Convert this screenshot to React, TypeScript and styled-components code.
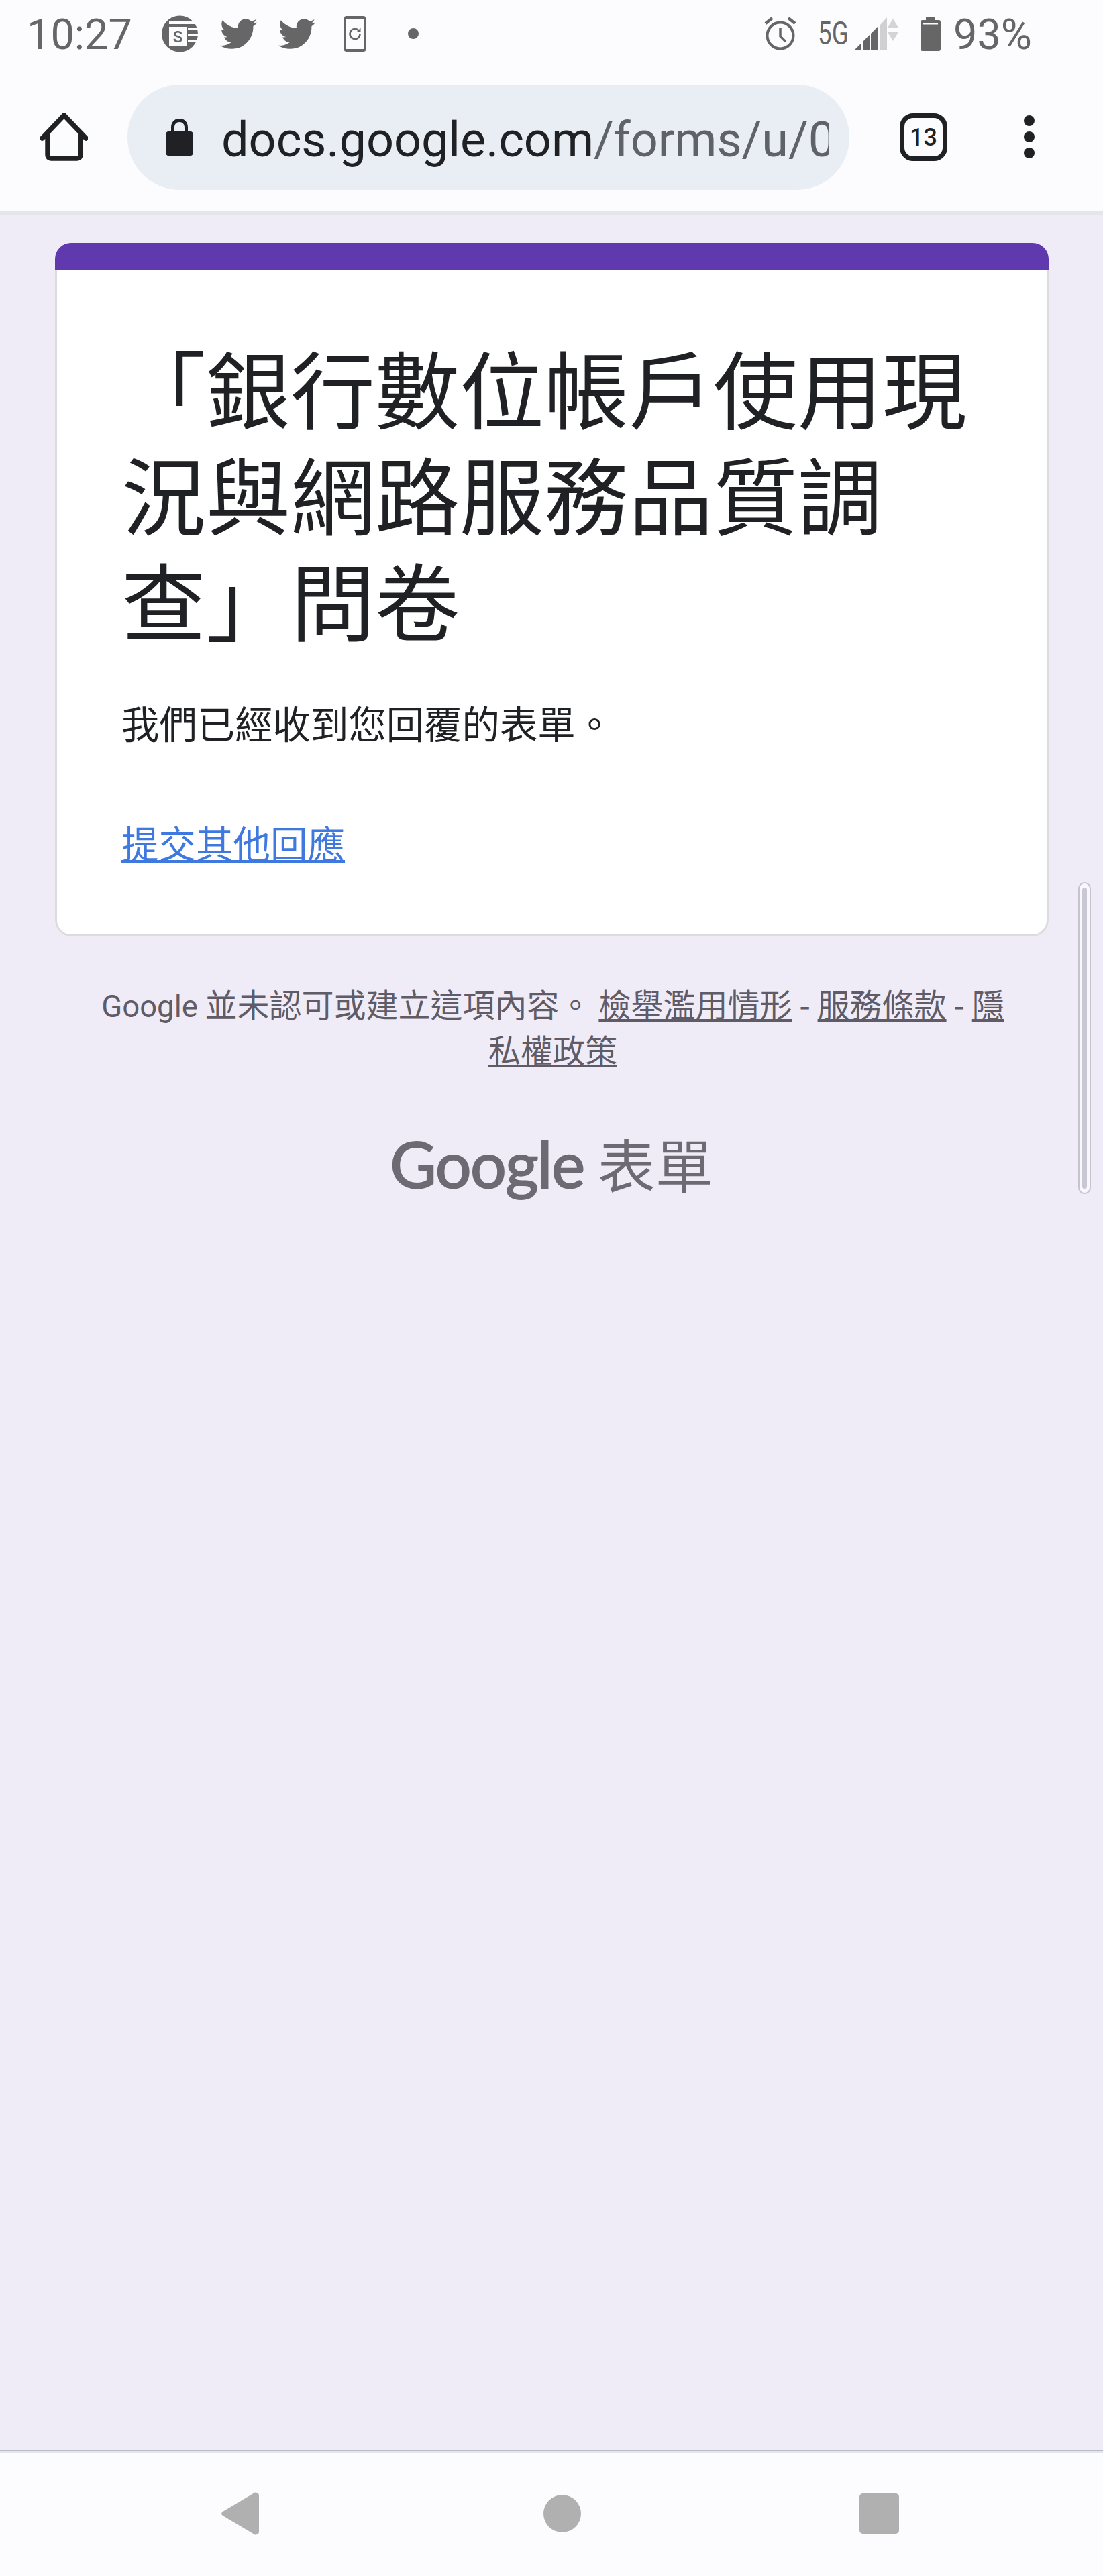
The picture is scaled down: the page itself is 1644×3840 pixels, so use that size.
import React from "react";
import styled, { createGlobalStyle } from "styled-components";
import { FaTwitter } from "react-icons/fa";

const GlobalStyle = createGlobalStyle`
  html, body {
    margin: 0;
    padding: 0;
    background: #efecf7;
  }
`;

const CJK = `"Noto Sans CJK TC", "Noto Sans CJK SC", Roboto, sans-serif`;
const ICON_GREY = "#666666";
const NAV_GREY = "#b0b0b0";

const Screen = styled.div`
  position: relative;
  width: 1644px;
  height: 3840px;
  display: flex;
  flex-direction: column;
  overflow: hidden;
  background: #efecf7;
  font-family: Roboto, ${CJK};
`;

const Header = styled.header`
  height: 315px;
  flex: none;
  background: #fcfcfe;
  border-bottom: 5px solid #e4e6ea;
`;

const StatusBar = styled.div`
  height: 100px;
  display: flex;
  align-items: center;
  justify-content: space-between;
  padding: 0 106px 0 40px;
`;

const StatusGroup = styled.div`
  display: flex;
  align-items: center;
`;

const StatusSlot = styled.div<{ $left: number }>`
  display: flex;
  align-items: center;
  margin-left: ${(p) => p.$left}px;
  color: ${ICON_GREY};
`;

const StatusText = styled.span`
  padding-top: 4px;
  font-size: 63px;
  line-height: 100px;
  color: ${ICON_GREY};
  white-space: nowrap;
`;

const StatusDot = styled.span`
  width: 16px;
  height: 16px;
  border-radius: 50%;
  background: ${ICON_GREY};
`;

const NetworkLabel = styled.span`
  display: inline-block;
  width: 46px;
  font-size: 49px;
  line-height: 60px;
  color: ${ICON_GREY};
  transform: scaleX(0.75);
  transform-origin: left center;
  white-space: nowrap;
`;

const Toolbar = styled.div`
  height: 215px;
  display: flex;
  align-items: flex-start;
  padding: 26px 0 0 60px;
`;

const ToolbarIcon = styled.svg`
  display: block;
  flex: none;
`;

const HomeSlot = styled.div`
  width: 71px;
  height: 157px;
  flex: none;
  display: flex;
  align-items: center;
`;

const UrlPill = styled.div`
  width: 1076px;
  height: 157px;
  margin-left: 59px;
  flex: none;
  display: flex;
  align-items: center;
  padding-left: 57px;
  box-sizing: border-box;
  border-radius: 78px;
  background: #e8eef3;
`;

const UrlClip = styled.div`
  width: 905px;
  margin-left: 42px;
  padding-top: 8px;
  overflow: hidden;
  white-space: nowrap;
  font-size: 72px;
  line-height: 100px;
  color: #202124;
`;

const UrlPath = styled.span`
  color: #5f6368;
`;

const TabCounter = styled.div`
  width: 71px;
  height: 71px;
  margin: 43px 0 0 75px;
  flex: none;
  box-sizing: border-box;
  display: flex;
  align-items: center;
  justify-content: center;
  border: 7px solid #202124;
  border-radius: 20px;
  font-size: 36px;
  font-weight: 500;
  color: #202124;
`;

const MenuDots = styled.div`
  margin: 46px 0 0 114px;
  display: flex;
  flex-direction: column;
  gap: 8px;
`;

const MenuDot = styled.span`
  width: 16px;
  height: 16px;
  border-radius: 50%;
  background: #202124;
`;

const Page = styled.main`
  flex: 1;
  display: flex;
  flex-direction: column;
  padding-top: 42px;
`;

const Card = styled.section`
  width: 1481px;
  height: 1034px;
  margin-left: 82px;
  border-radius: 24px;
  overflow: hidden;
  display: flex;
  flex-direction: column;
`;

const CardAccent = styled.div`
  height: 40px;
  flex: none;
  background: #6039ae;
`;

const CardBody = styled.div`
  flex: 1;
  padding: 94px 85px 0 96px;
  background: #ffffff;
  border: 3px solid #dadce0;
  border-top: 0;
  border-radius: 0 0 24px 24px;
`;

const Title = styled.h1`
  margin: 0;
  font-family: ${CJK};
  font-size: 126px;
  font-weight: 400;
  line-height: 158px;
  color: #202124;
`;

const Message = styled.p`
  margin: 67px 0 0;
  font-family: ${CJK};
  font-size: 56.4px;
  line-height: 80px;
  color: #202124;
`;

const SubmitLink = styled.a`
  display: inline-block;
  margin-top: 98px;
  font-family: ${CJK};
  font-size: 55.5px;
  line-height: 80px;
  color: #3f79e0;
  text-decoration: underline;
`;

const Footer = styled.footer`
  width: 1380px;
  margin: 65px 0 0 134px;
  text-align: center;
  font-family: ${CJK};
  font-size: 48px;
  line-height: 68px;
  color: #5f5c68;
`;

const FooterBrand = styled.span`
  font-family: Roboto, sans-serif;
  font-size: 45.5px;
  line-height: 1;
`;

const FooterLink = styled.a`
  color: #5f5c68;
  text-decoration: underline;
`;

const Brand = styled.div`
  margin-top: 82px;
  display: flex;
  align-items: center;
  justify-content: center;
  gap: 20px;
  color: #6d6a73;
`;

const BrandWord = styled.span`
  font-family: Lato, Inter, sans-serif;
  font-size: 95px;
  font-weight: 400;
  letter-spacing: -1.5px;
  line-height: 110px;
  -webkit-text-stroke: 2px #6d6a73;
`;

const BrandProduct = styled.span`
  font-family: ${CJK};
  font-size: 86px;
  line-height: 110px;
`;

const Scrollbar = styled.div`
  position: absolute;
  left: 1607px;
  top: 1315px;
  width: 19px;
  height: 465px;
  box-sizing: border-box;
  padding: 6px 4px;
  border-radius: 10px;
  background: #f8f7fc;
  border: 2px solid #c6c4d0;
`;

const ScrollThumb = styled.div`
  height: 100%;
  border-radius: 4px;
  background: #c9c7d3;
`;

const NavBar = styled.nav`
  height: 188px;
  flex: none;
  box-sizing: border-box;
  background: #fcfcfe;
  border-top: 2px solid #b9bcc4;
  box-shadow: inset 0 3px 0 #e2e6ec;
  display: grid;
  grid-template-columns: 330px 480px 471px auto;
  padding-top: 61px;
`;

const NavCell = styled.div<{ $column: number }>`
  grid-column: ${(p) => p.$column};
`;

const BackShape = () => (
  <svg width="56" height="64" viewBox="0 0 56 64" style={{ display: "block" }}>
    <path d="M50 0.5C53 0.5 56 2 56 5V59C56 62 53 63.5 50 63.5L2 35C-0.5 33 -0.5 31 2 29Z" fill={NAV_GREY} />
  </svg>
);

const HomeShape = styled.div`
  width: 56px;
  height: 56px;
  margin-top: 4px;
  border-radius: 50%;
  background: ${NAV_GREY};
`;

const RecentShape = styled.div`
  width: 59px;
  height: 60px;
  margin-top: 2px;
  border-radius: 5px;
  background: ${NAV_GREY};
`;

const SheetsBadge = () => (
  <svg width="55" height="57" viewBox="0 0 55 57" style={{ display: "block" }}>
    <circle cx="27" cy="28.5" r="27" fill={ICON_GREY} />
    <rect x="11" y="10" width="38" height="4" fill="#fcfcfe" />
    <rect x="39" y="20" width="16" height="3" fill="#fcfcfe" />
    <rect x="39" y="29" width="16" height="3" fill="#fcfcfe" />
    <rect x="39" y="38" width="16" height="3" fill="#fcfcfe" />
    <rect x="11" y="18" width="26" height="28" fill="#fcfcfe" />
    <text x="24" y="41" fontSize="24" fontWeight="500" fontFamily="Roboto" textAnchor="middle" fill={ICON_GREY}>S</text>
  </svg>
);

const PhoneRefresh = () => (
  <svg width="34" height="53" viewBox="0 0 34 53" fill="none" style={{ display: "block" }}>
    <rect x="2" y="2" width="30" height="49" rx="2.5" stroke={ICON_GREY} strokeWidth="4" />
    <path d="M24.5 26.5a7.5 7.5 0 1 1-2.5-5.6" stroke={ICON_GREY} strokeWidth="2.5" />
    <path d="M25.5 17.5v6.5h-6.5z" fill={ICON_GREY} />
  </svg>
);

const AlarmIcon = () => (
  <svg width="48" height="50" viewBox="0 0 48 50" fill="none" style={{ display: "block" }}>
    <circle cx="24" cy="28" r="19.5" stroke={ICON_GREY} strokeWidth="4" />
    <path d="M24 16v13l8 8" stroke={ICON_GREY} strokeWidth="3.5" />
    <path d="M2 10 12 2M46 10 36 2" stroke={ICON_GREY} strokeWidth="4.5" />
  </svg>
);

const SignalIcon = () => (
  <svg width="68" height="48" viewBox="0 0 68 48" style={{ display: "block" }}>
    <path d="M0 48 9 39V48Z" fill={ICON_GREY} />
    <path d="M12 48V36L22 26V48Z" fill={ICON_GREY} />
    <path d="M24 48V24L35 13V48Z" fill={ICON_GREY} />
    <path d="M38 48V11L48 0V48Z" fill="#d0d0d0" />
    <path d="M60 2 68 15H52Z" fill="#d4d4d4" transform="translate(-3 0)" />
    <path d="M60 35 68 22H52Z" fill="#d4d4d4" transform="translate(-3 0)" />
  </svg>
);

const BatteryIcon = () => (
  <svg width="30" height="51" viewBox="0 0 30 51" style={{ display: "block" }}>
    <path d="M8 5V0H22V5H27C29 5 30 6 30 8V48C30 50 29 51 27 51H3C1 51 0 50 0 48V8C0 6 1 5 3 5Z" fill={ICON_GREY} />
    <rect x="4" y="10" width="22" height="1.5" fill="#fcfcfe" />
  </svg>
);

const HomeIcon = () => (
  <ToolbarIcon width="71" height="71" viewBox="0 0 71 71" fill="none">
    <path
      d="M3 37 35.5 3 68 37M11 31V62C11 65 13 67 16 67H55C58 67 60 65 60 62V31"
      stroke="#202124"
      strokeWidth="7.5"
      strokeLinecap="round"
      strokeLinejoin="round"
    />
  </ToolbarIcon>
);

const LockIcon = () => (
  <ToolbarIcon width="41" height="55" viewBox="0 0 41 55">
    <path
      d="M20.5 0C12 0 8 6 8 13V19H4C2 19 0 21 0 23V51C0 53 2 55 4 55H37C39 55 41 53 41 51V23C41 21 39 19 37 19H33V13C33 6 29 0 20.5 0ZM20.5 5C25 5 28 8 28 13V19H13V13C13 8 16 5 20.5 5Z"
      fill="#202124"
    />
  </ToolbarIcon>
);

export default function App() {
  return (
    <Screen>
      <GlobalStyle />
      <Header>
        <StatusBar>
          <StatusGroup>
            <StatusText>10:27</StatusText>
            <StatusSlot $left={44}><SheetsBadge /></StatusSlot>
            <StatusSlot $left={32}><FaTwitter size={55} /></StatusSlot>
            <StatusSlot $left={32}><FaTwitter size={55} /></StatusSlot>
            <StatusSlot $left={42}><PhoneRefresh /></StatusSlot>
            <StatusSlot $left={62}><StatusDot /></StatusSlot>
          </StatusGroup>
          <StatusGroup>
            <AlarmIcon />
            <StatusSlot $left={32}><NetworkLabel>5G</NetworkLabel></StatusSlot>
            <StatusSlot $left={9}><SignalIcon /></StatusSlot>
            <StatusSlot $left={30}><BatteryIcon /></StatusSlot>
            <StatusSlot $left={19}><StatusText>93%</StatusText></StatusSlot>
          </StatusGroup>
        </StatusBar>
        <Toolbar>
          <HomeSlot><HomeIcon /></HomeSlot>
          <UrlPill>
            <LockIcon />
            <UrlClip>docs.google.com<UrlPath>/forms/u/0/d/e/1FAIpQLSe</UrlPath></UrlClip>
          </UrlPill>
          <TabCounter>13</TabCounter>
          <MenuDots>
            <MenuDot />
            <MenuDot />
            <MenuDot />
          </MenuDots>
        </Toolbar>
      </Header>
      <Page>
        <Card>
          <CardAccent />
          <CardBody>
            <Title>「銀行數位帳戶使用現況與網路服務品質調查」問卷</Title>
            <Message>我們已經收到您回覆的表單。</Message>
            <SubmitLink href="#">提交其他回應</SubmitLink>
          </CardBody>
        </Card>
        <Footer>
          <FooterBrand>Google</FooterBrand> 並未認可或建立這項內容。 <FooterLink href="#">檢舉濫用情形</FooterLink> - <FooterLink href="#">服務條款</FooterLink> - <FooterLink href="#">隱私權政策</FooterLink>
        </Footer>
        <Brand>
          <BrandWord>Google</BrandWord>
          <BrandProduct>表單</BrandProduct>
        </Brand>
      </Page>
      <Scrollbar><ScrollThumb /></Scrollbar>
      <NavBar>
        <NavCell $column={2}><BackShape /></NavCell>
        <NavCell $column={3}><HomeShape /></NavCell>
        <NavCell $column={4}><RecentShape /></NavCell>
      </NavBar>
    </Screen>
  );
}
